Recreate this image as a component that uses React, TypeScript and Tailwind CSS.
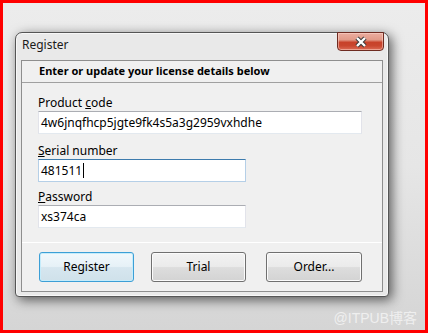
import React from 'react';

const font = "font-['Noto_Sans','Liberation_Sans',sans-serif]";

const Field: React.FC<{ label: React.ReactNode; value: string; width: string; focused?: boolean; gap: string }> = ({
    label,
    value,
    width,
    focused,
    gap,
}) => (
    <div className={`flex flex-col ${gap}`}>
        <div className="h-[16px] leading-[16px] text-[12px] text-black">{label}</div>
        <div
            className={`h-[23px] ${width} flex items-center pl-[2px] bg-white text-[12px] text-black border ${
                focused
                    ? 'border-t-[#3d7bad] border-x-[#b5cfe7] border-b-[#b5cfe7]'
                    : 'border-t-[#abadb3] border-x-[#e2e3ea] border-b-[#e3e9ef]'
            }`}
        >
            <span>{value}</span>
            {focused && <span className="ml-px w-px h-[15px] bg-black"></span>}
        </div>
    </div>
);

const Button: React.FC<{ label: string; primary?: boolean; width: string }> = ({ label, primary, width }) => (
    <button
        className={`h-[30px] ${width} rounded-[3px] border text-[12px] text-black ${
            primary
                ? 'border-[#3c9fd6] bg-[linear-gradient(to_bottom,#f1f8fc_0%,#e6f1f7_48%,#d6e6ef_52%,#cfe1ea_100%)] shadow-[inset_0_0_0_1px_#c5ecfb]'
                : 'border-[#707070] bg-[linear-gradient(to_bottom,#f2f2f2_0%,#ebebeb_48%,#dddddd_52%,#d3d3d3_100%)] shadow-[inset_0_0_0_1px_#fbfbfb]'
        }`}
    >
        {label}
    </button>
);

const CloseIcon = () => (
    <svg width="16" height="12" viewBox="0 0 16 12">
        <path d="M4 2 L12 10 M12 2 L4 10" stroke="#3a3a3a" strokeWidth="4.4" strokeLinecap="butt" fill="none" />
        <path d="M4 2 L12 10 M12 2 L4 10" stroke="#ffffff" strokeWidth="2.4" strokeLinecap="butt" fill="none" />
    </svg>
);

export default function App() {
    return (
        <div
            className={`w-[428px] h-[333px] border-[3px] border-[#ff0000] bg-[linear-gradient(to_bottom,#ececec_0%,#e6e6e6_50%,#d5d5d5_100%)] pl-[12px] pt-[29px] flex flex-col ${font}`}
        >
            <div className="w-[374px] h-[265px] flex flex-col rounded-t-[7px] rounded-b-[4px] border border-[#555555] bg-[#e9e9e9] shadow-[3px_3px_12px_rgba(0,0,0,0.6),inset_0_0_0_1px_#f7f7f7]">
                <div className="h-[27px] flex items-start justify-between">
                    <span className="pl-[6px] pt-[4px] text-[12px] leading-[16px] text-[#1a1a1a]">Register</span>
                    <div className="mr-[4px] -mt-px w-[47px] h-[19px] flex items-center justify-center rounded-b-[4px] border border-[#6e2b21] bg-[linear-gradient(to_bottom,#ebada0_0%,#e29a88_40%,#c84129_55%,#c9462e_75%,#dc6c56_100%)] shadow-[inset_0_0_0_1px_rgba(255,220,210,0.5)]">
                        <CloseIcon />
                    </div>
                </div>
                <div className="ml-[5px] w-[362px] h-[232px] flex flex-col border border-[#8e8e8e] bg-[#f0f0f0]">
                    <div className="h-[22px] flex items-center pl-[17px] border-b border-[#a0a0a0] bg-[#f0f0f0] text-[11px] font-bold text-black">
                        Enter or update your license details below
                    </div>
                    <div className="flex flex-col pl-[16px] pt-[12px]">
                        <Field
                            gap=""
                            label={<>Product <span className="underline">c</span>ode</>}
                            value="4w6jnqfhcp5jgte9fk4s5a3g2959vxhdhe"
                            width="w-[324px]"
                        />
                        <Field
                            gap="mt-[9px]"
                            label={<><span className="underline">S</span>erial number</>}
                            value="481511"
                            width="w-[208px]"
                            focused
                        />
                        <Field
                            gap="mt-[7px]"
                            label={<><span className="underline">P</span>assword</>}
                            value="xs374ca"
                            width="w-[208px]"
                        />
                    </div>
                    <div className="mt-[14px] border-t border-white"></div>
                    <div className="mt-[9px] flex pl-[17px]">
                        <Button label="Register" primary width="w-[95px]" />
                        <div className="ml-[17px]">
                            <Button label="Trial" width="w-[95px]" />
                        </div>
                        <div className="ml-[20px]">
                            <Button label="Order..." width="w-[96px]" />
                        </div>
                    </div>
                </div>
            </div>
            <div className="mt-[13px] flex justify-end pr-[8px] text-[14px] leading-[16px] text-[#efefef] font-['Liberation_Sans','Noto_Sans_CJK_SC',sans-serif]">
                @ITPUB博客
            </div>
        </div>
    );
}
